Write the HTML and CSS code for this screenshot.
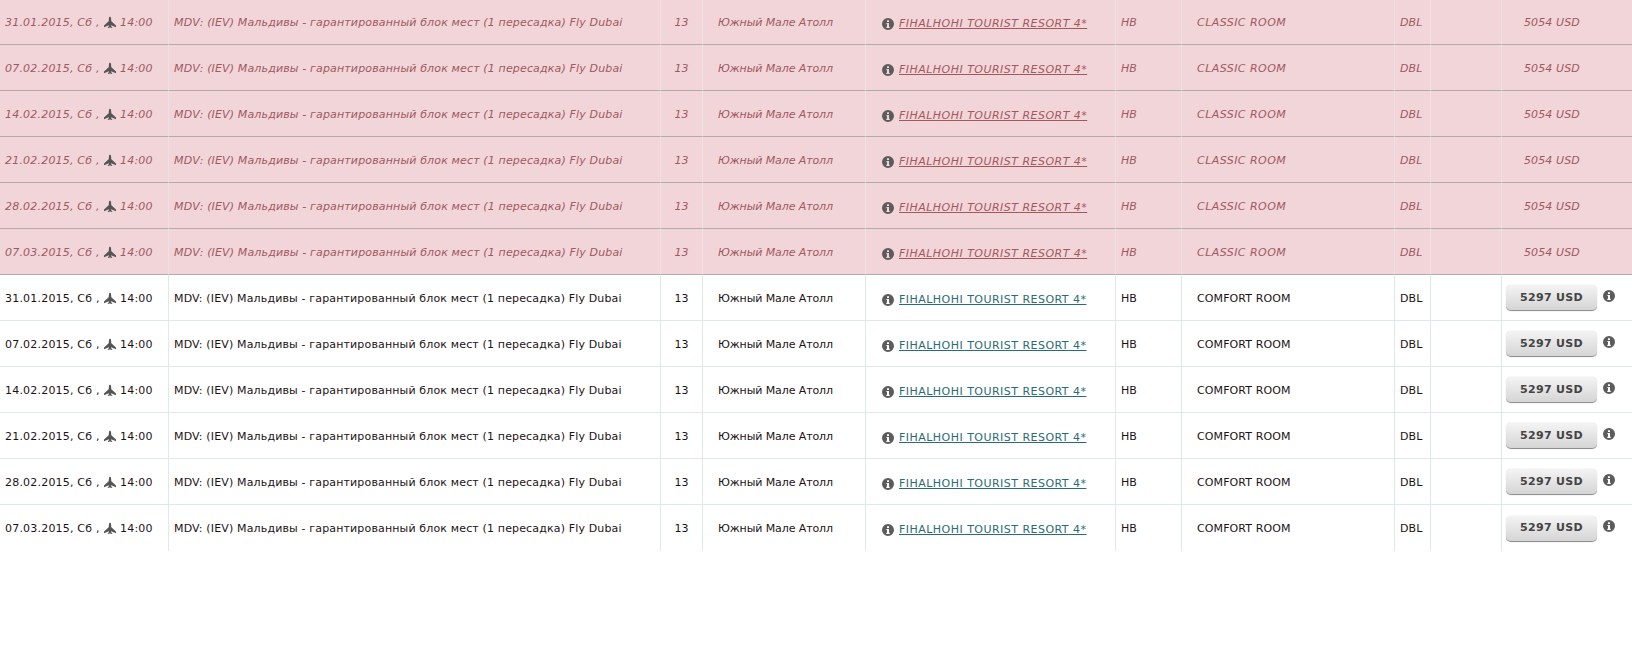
FILE: index.html
```html
<!DOCTYPE html>
<html lang="ru">
<head>
<meta charset="utf-8">
<title>Туры</title>
<link rel="stylesheet" href="styles.css">
</head>
<body>
<svg class="defs" width="0" height="0" aria-hidden="true">
  <symbol id="plane" viewBox="0 0 12 12"><path d="M5 2 C5.2 .2 6.8 .2 7 2 L7.3 5.2 L12 9.4 V11.2 L7.2 9.2 L7.1 10.2 L8.2 11.2 V12 L6 11.4 L3.8 12 V11.2 L4.9 10.2 L4.8 9.2 L0 11.2 V9.4 L4.7 5.2 Z"/></symbol>
  <symbol id="info" viewBox="0 0 12 12"><path fill-rule="evenodd" d="M6 0a6 6 0 1 1 0 12A6 6 0 0 1 6 0ZM5 2.2V4h2V2.2ZM4.4 5v1.1H5v2.6H4.3V10h3.4V8.7H7V5Z"/></symbol>
</svg>
<table class="grid">
<colgroup>
  <col class="c-date"><col class="c-tour"><col class="c-nights"><col class="c-region"><col class="c-hotel"><col class="c-meal"><col class="c-room"><col class="c-acc"><col class="c-extra"><col class="c-price">
</colgroup>
<tbody>
<tr class="sold"><td class="date">31.01.2015, Сб , <svg class="plane"><use href="#plane"/></svg> 14:00</td><td class="tour">MDV: (IEV) Мальдивы - гарантированный блок мест (1 пересадка) Fly Dubai</td><td class="center">13</td><td class="indent region">Южный Мале Атолл</td><td class="hotel"><svg class="info"><use href="#info"/></svg><a href="#">FIHALHOHI TOURIST RESORT 4*</a></td><td>HB</td><td class="indent room">CLASSIC ROOM</td><td>DBL</td><td></td><td class="price">5054 USD</td></tr>
<tr class="sold"><td class="date">07.02.2015, Сб , <svg class="plane"><use href="#plane"/></svg> 14:00</td><td class="tour">MDV: (IEV) Мальдивы - гарантированный блок мест (1 пересадка) Fly Dubai</td><td class="center">13</td><td class="indent region">Южный Мале Атолл</td><td class="hotel"><svg class="info"><use href="#info"/></svg><a href="#">FIHALHOHI TOURIST RESORT 4*</a></td><td>HB</td><td class="indent room">CLASSIC ROOM</td><td>DBL</td><td></td><td class="price">5054 USD</td></tr>
<tr class="sold"><td class="date">14.02.2015, Сб , <svg class="plane"><use href="#plane"/></svg> 14:00</td><td class="tour">MDV: (IEV) Мальдивы - гарантированный блок мест (1 пересадка) Fly Dubai</td><td class="center">13</td><td class="indent region">Южный Мале Атолл</td><td class="hotel"><svg class="info"><use href="#info"/></svg><a href="#">FIHALHOHI TOURIST RESORT 4*</a></td><td>HB</td><td class="indent room">CLASSIC ROOM</td><td>DBL</td><td></td><td class="price">5054 USD</td></tr>
<tr class="sold"><td class="date">21.02.2015, Сб , <svg class="plane"><use href="#plane"/></svg> 14:00</td><td class="tour">MDV: (IEV) Мальдивы - гарантированный блок мест (1 пересадка) Fly Dubai</td><td class="center">13</td><td class="indent region">Южный Мале Атолл</td><td class="hotel"><svg class="info"><use href="#info"/></svg><a href="#">FIHALHOHI TOURIST RESORT 4*</a></td><td>HB</td><td class="indent room">CLASSIC ROOM</td><td>DBL</td><td></td><td class="price">5054 USD</td></tr>
<tr class="sold"><td class="date">28.02.2015, Сб , <svg class="plane"><use href="#plane"/></svg> 14:00</td><td class="tour">MDV: (IEV) Мальдивы - гарантированный блок мест (1 пересадка) Fly Dubai</td><td class="center">13</td><td class="indent region">Южный Мале Атолл</td><td class="hotel"><svg class="info"><use href="#info"/></svg><a href="#">FIHALHOHI TOURIST RESORT 4*</a></td><td>HB</td><td class="indent room">CLASSIC ROOM</td><td>DBL</td><td></td><td class="price">5054 USD</td></tr>
<tr class="sold"><td class="date">07.03.2015, Сб , <svg class="plane"><use href="#plane"/></svg> 14:00</td><td class="tour">MDV: (IEV) Мальдивы - гарантированный блок мест (1 пересадка) Fly Dubai</td><td class="center">13</td><td class="indent region">Южный Мале Атолл</td><td class="hotel"><svg class="info"><use href="#info"/></svg><a href="#">FIHALHOHI TOURIST RESORT 4*</a></td><td>HB</td><td class="indent room">CLASSIC ROOM</td><td>DBL</td><td></td><td class="price">5054 USD</td></tr>
<tr><td class="date">31.01.2015, Сб , <svg class="plane"><use href="#plane"/></svg> 14:00</td><td class="tour">MDV: (IEV) Мальдивы - гарантированный блок мест (1 пересадка) Fly Dubai</td><td class="center">13</td><td class="indent region">Южный Мале Атолл</td><td class="hotel"><svg class="info"><use href="#info"/></svg><a href="#">FIHALHOHI TOURIST RESORT 4*</a></td><td>HB</td><td class="indent">COMFORT ROOM</td><td>DBL</td><td></td><td class="buy"><button type="button" class="btn">5297 USD</button><svg class="info"><use href="#info"/></svg></td></tr>
<tr><td class="date">07.02.2015, Сб , <svg class="plane"><use href="#plane"/></svg> 14:00</td><td class="tour">MDV: (IEV) Мальдивы - гарантированный блок мест (1 пересадка) Fly Dubai</td><td class="center">13</td><td class="indent region">Южный Мале Атолл</td><td class="hotel"><svg class="info"><use href="#info"/></svg><a href="#">FIHALHOHI TOURIST RESORT 4*</a></td><td>HB</td><td class="indent">COMFORT ROOM</td><td>DBL</td><td></td><td class="buy"><button type="button" class="btn">5297 USD</button><svg class="info"><use href="#info"/></svg></td></tr>
<tr><td class="date">14.02.2015, Сб , <svg class="plane"><use href="#plane"/></svg> 14:00</td><td class="tour">MDV: (IEV) Мальдивы - гарантированный блок мест (1 пересадка) Fly Dubai</td><td class="center">13</td><td class="indent region">Южный Мале Атолл</td><td class="hotel"><svg class="info"><use href="#info"/></svg><a href="#">FIHALHOHI TOURIST RESORT 4*</a></td><td>HB</td><td class="indent">COMFORT ROOM</td><td>DBL</td><td></td><td class="buy"><button type="button" class="btn">5297 USD</button><svg class="info"><use href="#info"/></svg></td></tr>
<tr><td class="date">21.02.2015, Сб , <svg class="plane"><use href="#plane"/></svg> 14:00</td><td class="tour">MDV: (IEV) Мальдивы - гарантированный блок мест (1 пересадка) Fly Dubai</td><td class="center">13</td><td class="indent region">Южный Мале Атолл</td><td class="hotel"><svg class="info"><use href="#info"/></svg><a href="#">FIHALHOHI TOURIST RESORT 4*</a></td><td>HB</td><td class="indent">COMFORT ROOM</td><td>DBL</td><td></td><td class="buy"><button type="button" class="btn">5297 USD</button><svg class="info"><use href="#info"/></svg></td></tr>
<tr><td class="date">28.02.2015, Сб , <svg class="plane"><use href="#plane"/></svg> 14:00</td><td class="tour">MDV: (IEV) Мальдивы - гарантированный блок мест (1 пересадка) Fly Dubai</td><td class="center">13</td><td class="indent region">Южный Мале Атолл</td><td class="hotel"><svg class="info"><use href="#info"/></svg><a href="#">FIHALHOHI TOURIST RESORT 4*</a></td><td>HB</td><td class="indent">COMFORT ROOM</td><td>DBL</td><td></td><td class="buy"><button type="button" class="btn">5297 USD</button><svg class="info"><use href="#info"/></svg></td></tr>
<tr class="last"><td class="date">07.03.2015, Сб , <svg class="plane"><use href="#plane"/></svg> 14:00</td><td class="tour">MDV: (IEV) Мальдивы - гарантированный блок мест (1 пересадка) Fly Dubai</td><td class="center">13</td><td class="indent region">Южный Мале Атолл</td><td class="hotel"><svg class="info"><use href="#info"/></svg><a href="#">FIHALHOHI TOURIST RESORT 4*</a></td><td>HB</td><td class="indent">COMFORT ROOM</td><td>DBL</td><td></td><td class="buy"><button type="button" class="btn">5297 USD</button><svg class="info"><use href="#info"/></svg></td></tr>
</tbody>
</table>
</body>
</html>
```
FILE: styles.css
```css
html, body { margin: 0; padding: 0; background: #fff; }
body { height: 648px; overflow: hidden; font: 11px/14px "DejaVu Sans", Verdana, sans-serif; color: #1d1216; }
.defs { position: absolute; }

.grid { border-collapse: separate; border-spacing: 0; table-layout: fixed; width: 1632px; }
.c-date { width: 169px; }
.c-tour { width: 492px; }
.c-nights { width: 42px; }
.c-region { width: 163px; }
.c-hotel { width: 250px; }
.c-meal { width: 66px; }
.c-room { width: 213px; }
.c-acc { width: 36px; }
.c-extra { width: 71px; }
.c-price { width: 130px; }

.grid td {
  height: 46px; padding: 2px 0 0 5px; box-sizing: border-box;
  border-right: 1px solid #dfe9e9; border-bottom: 1px solid #dfe9e9;
  white-space: nowrap; vertical-align: middle; letter-spacing: .1px;
}
.grid td:last-child { border-right: 0; }
.grid .last td { border-bottom: 0; }
.grid tr:first-child td { height: 45px; }
.grid .date { letter-spacing: .2px; }
.grid .tour { letter-spacing: .15px; }
.grid .center { text-align: center; padding-left: 0; }
.grid .indent { padding-left: 15px; }
.grid .region { letter-spacing: -.1px; }
.grid .room { letter-spacing: .45px; }
.grid .hotel { padding-left: 16px; padding-top: 4px; letter-spacing: .47px; }
.grid .price { padding-left: 22px; }
.grid .buy { padding-left: 4px; }

.plane { width: 12px; height: 12px; fill: #555; vertical-align: -2px; margin: 0 0 0 1px; }
.info { width: 12px; height: 12px; fill: #5c5c5c; vertical-align: -3px; }
.hotel .info { margin-right: 5px; }
.hotel a { color: #2a6c74; }

.sold td { background: #f2d5d9; color: #a0595f; font-style: italic; border-bottom-color: #b3aaab; border-right-color: #e9e3e4; }
.sold .hotel a { color: #a4585c; }

.btn {
  width: 91px; height: 26px; padding: 0; margin: 0 6px 1px 0; box-sizing: border-box; vertical-align: middle;
  border: 0; border-bottom: 1px solid #8f8f8f; border-radius: 5px;
  background: linear-gradient(#f4f4f4, #d5d5d5);
  box-shadow: 0 0 1px #aaa;
  font: bold 11px/14px "DejaVu Sans", Verdana, sans-serif; letter-spacing: .3px; color: #444;
}
.buy .info { vertical-align: 0; }
```
